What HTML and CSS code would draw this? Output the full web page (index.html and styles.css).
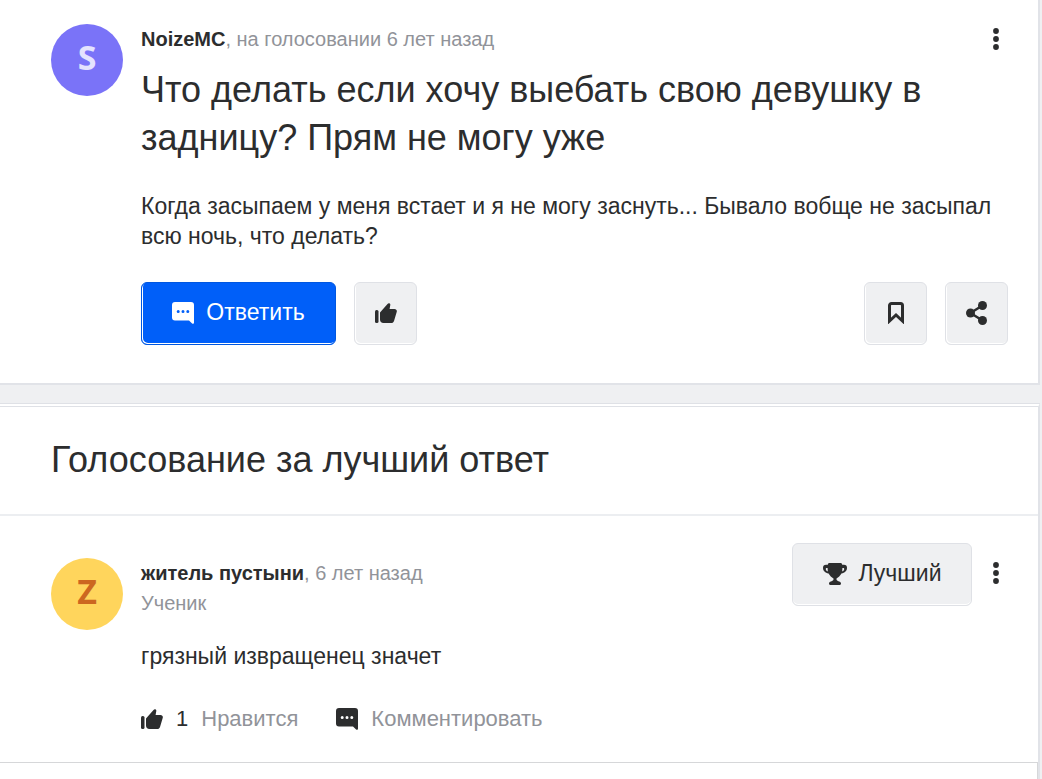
FILE: index.html
```html
<!DOCTYPE html>
<html lang="ru">
<head>
<meta charset="utf-8">
<meta name="viewport" content="width=device-width, initial-scale=1">
<title>Голосование за лучший ответ</title>
<link rel="stylesheet" href="styles.css">
</head>
<body>
<svg class="sprite" aria-hidden="true">
  <symbol id="thumb" viewBox="0 0 22 20"><rect x="0" y="7" width="3.500" height="13" rx="1.500"/><path d="M5 9.500 12.300 1.200c1.200-1.600 3.200-1 3 .8L14.600 6H19.500c1.700 0 2.700 1.400 2.200 3l-2.600 8.700c-.5 1.500-1.400 2.300-3 2.300H8.500C6.300 20 5 18.700 5 16.500Z"/></symbol>
  <symbol id="chat" viewBox="0 0 22 22"><path fill-rule="evenodd" d="M3 0H19a3 3 0 0 1 3 3V20.500c0 1.200-1 1.600-1.900.9L17 18.500H3a3 3 0 0 1-3-3V3a3 3 0 0 1 3-3ZM6.200 7.900a1.500 1.500 0 1 0 0 3 1.500 1.500 0 0 0 0-3Zm4.800 0a1.500 1.500 0 1 0 0 3 1.500 1.500 0 0 0 0-3Zm4.800 0a1.500 1.500 0 1 0 0 3 1.500 1.500 0 0 0 0-3Z"/></symbol>
  <symbol id="dots" viewBox="0 0 6 22"><circle cx="3" cy="3" r="2.900"/><circle cx="3" cy="11" r="2.900"/><circle cx="3" cy="19" r="2.900"/></symbol>
</svg>

<main>
  <article class="card question">
    <span class="avatar avatar-violet">S</span>
    <div class="content">
      <header class="head">
        <p class="meta"><a class="author" href="#">NoizeMC</a>, на голосовании 6 лет назад</p>
        <button class="more" type="button" aria-label="Меню вопроса"><svg><use href="#dots"/></svg></button>
      </header>
      <h1 class="title">Что делать если хочу выебать свою девушку в задницу? Прям не могу уже</h1>
      <p class="text">Когда засыпаем у меня встает и я не могу заснуть... Бывало вобще не засыпал всю ночь, что делать?</p>
      <div class="actions">
        <button class="btn btn-primary" type="button"><svg class="icon-chat"><use href="#chat"/></svg>Ответить</button>
        <button class="btn btn-icon" type="button" aria-label="Нравится"><svg class="icon-thumb"><use href="#thumb"/></svg></button>
        <span class="spacer"></span>
        <button class="btn btn-icon" type="button" aria-label="В закладки"><svg class="icon-mark" viewBox="0 0 16 22"><path d="M1.500 19V3.500a2 2 0 0 1 2-2h9a2 2 0 0 1 2 2V19L8 13Z" fill="none" stroke="currentColor" stroke-width="3"/></svg></button>
        <button class="btn btn-icon" type="button" aria-label="Поделиться"><svg class="icon-share" viewBox="0 0 22 24"><path d="M16.500 4.500 4.500 12l12 7.500" fill="none" stroke="currentColor" stroke-width="2.500"/><circle cx="16.500" cy="4.500" r="4.500"/><circle cx="4.500" cy="12" r="4.500"/><circle cx="16.500" cy="19.500" r="4.500"/></svg></button>
      </div>
    </div>
  </article>

  <section class="card answers">
    <h2 class="title section-title">Голосование за лучший ответ</h2>
    <article class="answer">
      <span class="avatar avatar-yellow">Z</span>
      <div class="content">
        <header class="head">
          <div class="who">
            <p class="meta"><a class="author" href="#">житель пустыни</a>, 6 лет назад</p>
            <p class="meta">Ученик</p>
          </div>
          <div class="tools">
            <button class="btn btn-best" type="button"><svg class="icon-cup" viewBox="0 0 24 22"><path fill-rule="evenodd" d="M6.500 0h11c1 0 1.500.6 1.700 1.800H21c2 0 3 1.200 3 3 0 3.200-2.200 5.200-5.600 5.700-1.200 2.300-3 4-4.900 4.900v1.200c0 .9 1 1.400 2.500 1.800 1.400.4 2 1 2 2.200 0 .9-.4 1.400-1.200 1.400H7.200c-.8 0-1.200-.5-1.200-1.400 0-1.200.6-1.800 2-2.200 1.500-.4 2.500-.9 2.500-1.800v-1.200c-1.900-.9-3.700-2.600-4.900-4.900C2.200 10 0 8 0 4.800c0-1.800 1-3 3-3h1.800C5 .6 5.500 0 6.500 0ZM3.800 5c-.7 0-1 .4-1 1 0 1 .7 1.900 2 2.400L4.600 5Zm16.400 0h-.8l-.2 3.400c1.300-.5 2-1.400 2-2.400 0-.6-.3-1-1-1Z"/></svg>Лучший</button>
            <button class="more" type="button" aria-label="Меню ответа"><svg><use href="#dots"/></svg></button>
          </div>
        </header>
        <p class="text">грязный извращенец значет</p>
        <footer class="reactions">
          <button class="link" type="button"><svg class="icon-thumb"><use href="#thumb"/></svg><span class="count">1</span>Нравится</button>
          <button class="link" type="button"><svg class="icon-chat"><use href="#chat"/></svg>Комментировать</button>
        </footer>
      </div>
    </article>
    <div class="reply-box"></div>
  </section>
</main>
</body>
</html>
```
FILE: styles.css
```css
* { box-sizing: border-box; }

body {
  margin: 0;
  background: #eff0f2;
  color: #2c2d2e;
  font-family: "Liberation Sans", Arial, sans-serif;
  overflow: hidden;
}

h1, h2, p { margin: 0; }

button {
  padding: 0;
  border: 0;
  background: none;
  color: inherit;
  font: inherit;
}

svg { display: block; fill: currentColor; flex: none; }
.sprite { display: none; }

main { padding-right: 2px; }

.card {
  background: #fff;
  border: 2px solid #e1e3e8;
  border-width: 0 2px 2px 0;
}

.question, .answer {
  display: grid;
  grid-template-columns: 72px minmax(0, 1fr);
  column-gap: 18px;
}

.question { padding: 24px 30px 38px 51px; }

.avatar {
  display: flex;
  align-items: center;
  justify-content: center;
  width: 72px;
  height: 72px;
  padding-bottom: 6px;
  border-radius: 50%;
  font: bold 34px/48px "Open Sans", sans-serif;
}

.avatar-violet { background: #7a73f8; color: #e4e3fe; }
.avatar-yellow { background: #ffd55c; color: #cc6720; }

.head {
  display: flex;
  align-items: flex-start;
  justify-content: space-between;
}

.meta { color: #919399; font-size: 20px; line-height: 30px; }
.author { color: #2c2d2e; font-weight: bold; text-decoration: none; }

.more {
  display: flex;
  align-items: center;
  justify-content: center;
  width: 24px;
  height: 30px;
}

.more svg { width: 6px; height: 22px; }

.title { font-size: 36px; font-weight: 400; line-height: 48px; }
.question .title { margin-top: 12px; }

.text { font-size: 23px; line-height: 30px; }
.question .text { margin-top: 29px; }

.actions { display: flex; gap: 18px; margin-top: 31px; }
.spacer { flex: 1; margin-right: -18px; }

.btn {
  display: flex;
  align-items: center;
  justify-content: center;
  height: 63px;
  padding-bottom: 2px;
  border: 1px solid #dfe1e6;
  border-radius: 6px;
  background: #eff0f2;
  font-size: 23px;
  box-shadow: inset 1px -1px #fff;
}

.btn-primary {
  gap: 12px;
  width: 195px;
  border-color: #0057e0;
  background: #005ff9;
  color: #fff;
}

.btn-icon { width: 63px; }
.btn-best { gap: 12px; width: 180px; box-shadow: inset 0 -1px #fff; }

.icon-chat { width: 22px; height: 22px; }
.icon-thumb { width: 22px; height: 20px; }
.icon-mark { width: 16px; height: 22px; }
.icon-share { width: 22px; height: 24px; }
.icon-cup { width: 24px; height: 22px; }

.answers {
  margin-top: 18px;
  border-top: 4px double #dfe1e6;
}

.section-title {
  padding: 29px 51px 30px;
  border-bottom: 2px solid #eceef1;
}

.answer { padding: 27px 30px 28px 51px; }
.answer .avatar, .who, .tools .more { margin-top: 15px; }
.answer .head { height: 83px; }
.answer .text { margin-top: 15px; }

.tools { display: flex; align-items: flex-start; gap: 12px; }

.reactions { display: flex; gap: 38px; margin-top: 33px; }

.link {
  display: flex;
  align-items: center;
  gap: 13px;
  color: #919399;
  font-size: 22px;
  line-height: 30px;
}

.link svg, .count { color: #2c2d2e; }

.reply-box {
  min-height: 48px;
  border: 1px solid #d6d7d9;
  border-width: 1px 1px 0 0;
}
```
